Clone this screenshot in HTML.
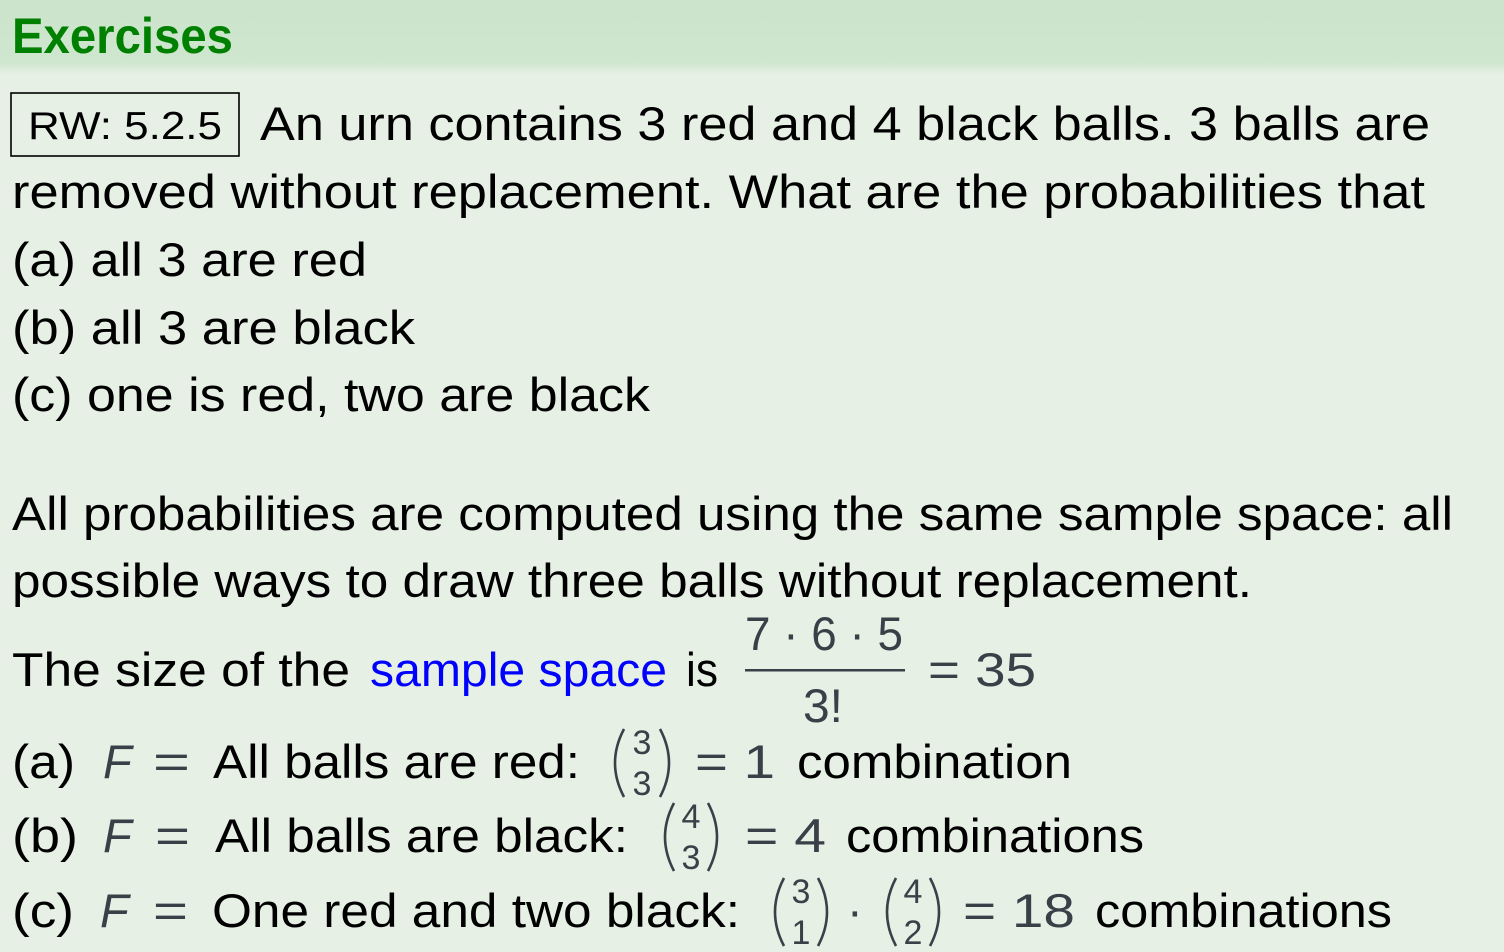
<!DOCTYPE html>
<html><head><meta charset="utf-8"><style>
html,body{margin:0;padding:0;width:1504px;height:952px;overflow:hidden;background:#e6f0e5}
svg{display:block}
text{font-family:"Liberation Sans",sans-serif}
</style></head><body>
<svg width="1504" height="952" xmlns="http://www.w3.org/2000/svg">
<defs><linearGradient id="g" x1="0" y1="0" x2="0" y2="1"><stop offset="0" stop-color="#cbe4cb"/><stop offset="0.85" stop-color="#cfe6cf"/><stop offset="1" stop-color="#e6f0e5"/></linearGradient></defs>
<rect x="0" y="0" width="1504" height="74" fill="url(#g)"/>
<text x="12" y="53" font-size="50" font-weight="bold" fill="#008000" textLength="221" lengthAdjust="spacingAndGlyphs">Exercises</text>
<g font-size="47" fill="#000">
<rect x="11" y="93" width="228" height="63" fill="none" stroke="#000" stroke-width="1.6"/>
<text x="28" y="139" font-size="39" textLength="194" lengthAdjust="spacingAndGlyphs">RW: 5.2.5</text>
<text x="260" y="140" textLength="1170" lengthAdjust="spacingAndGlyphs">An urn contains 3 red and 4 black balls.  3 balls are</text>
<text x="12" y="208" textLength="1413" lengthAdjust="spacingAndGlyphs">removed without replacement.  What are the probabilities that</text>
<text x="12" y="276" textLength="355" lengthAdjust="spacingAndGlyphs">(a) all 3 are red</text>
<text x="12" y="344" textLength="403" lengthAdjust="spacingAndGlyphs">(b) all 3 are black</text>
<text x="12" y="411" textLength="638" lengthAdjust="spacingAndGlyphs">(c) one is red, two are black</text>
<text x="12" y="530" textLength="1441" lengthAdjust="spacingAndGlyphs">All probabilities are computed using the same sample space:  all</text>
<text x="12" y="597" textLength="1240" lengthAdjust="spacingAndGlyphs">possible ways to draw three balls without replacement.</text>
<text x="12" y="686" textLength="338" lengthAdjust="spacingAndGlyphs">The size of the</text>
<text x="370" y="686" fill="#0000ff" textLength="297" lengthAdjust="spacingAndGlyphs">sample space</text>
<text x="686" y="686" textLength="32" lengthAdjust="spacingAndGlyphs">is</text>
<g fill="#3a4048">
<text x="745" y="650" textLength="158" lengthAdjust="spacingAndGlyphs">7 · 6 · 5</text>
<rect x="745" y="669" width="160" height="2.5"/>
<text x="803" y="722" textLength="40" lengthAdjust="spacingAndGlyphs">3!</text>
<text x="928" y="686" textLength="108" lengthAdjust="spacingAndGlyphs">= 35</text>
</g>
<text x="12" y="778" textLength="63" lengthAdjust="spacingAndGlyphs">(a)</text>
<g fill="#3a4048">
<text x="103" y="778" font-style="italic">F</text>
<text x="153" y="778" textLength="37" lengthAdjust="spacingAndGlyphs">=</text>
<text x="695" y="778" textLength="80" lengthAdjust="spacingAndGlyphs">= 1</text>
</g>
<text x="213" y="778" textLength="367" lengthAdjust="spacingAndGlyphs">All balls are red:</text>
<text x="797" y="778" textLength="275" lengthAdjust="spacingAndGlyphs">combination</text>
<text x="12" y="852" textLength="66" lengthAdjust="spacingAndGlyphs">(b)</text>
<g fill="#3a4048">
<text x="103" y="852" font-style="italic">F</text>
<text x="155" y="852" textLength="35" lengthAdjust="spacingAndGlyphs">=</text>
<text x="745" y="852" textLength="81" lengthAdjust="spacingAndGlyphs">= 4</text>
</g>
<text x="215" y="852" textLength="413" lengthAdjust="spacingAndGlyphs">All balls are black:</text>
<text x="846" y="852" textLength="298" lengthAdjust="spacingAndGlyphs">combinations</text>
<text x="12" y="927" textLength="62" lengthAdjust="spacingAndGlyphs">(c)</text>
<g fill="#3a4048">
<text x="100" y="927" font-style="italic">F</text>
<text x="153" y="927" textLength="35" lengthAdjust="spacingAndGlyphs">=</text>
<text x="847" y="927">·</text>
<text x="963" y="927" textLength="112" lengthAdjust="spacingAndGlyphs">= 18</text>
</g>
<text x="212" y="927" textLength="528" lengthAdjust="spacingAndGlyphs">One red and two black:</text>
<text x="1095" y="927" textLength="297" lengthAdjust="spacingAndGlyphs">combinations</text>
</g>
<g fill="none" stroke="#3a4048" stroke-width="2.6">
<path d="M624 729 Q606 763 624 797"/><path d="M660 729 Q678 763 660 797"/>
<path d="M674 803 Q656 837 674 871"/><path d="M708 803 Q726 837 708 871"/>
<path d="M784 878 Q766 912 784 946"/><path d="M818 878 Q836 912 818 946"/>
<path d="M896 878 Q878 912 896 946"/><path d="M930 878 Q948 912 930 946"/>
</g>
<g fill="#3a4048" font-size="34" text-anchor="middle">
<text x="642" y="754">3</text><text x="642" y="795">3</text>
<text x="691" y="828">4</text><text x="691" y="869">3</text>
<text x="801" y="903">3</text><text x="801" y="944">1</text>
<text x="913" y="903">4</text><text x="913" y="944">2</text>
</g>
</svg>
</body></html>
